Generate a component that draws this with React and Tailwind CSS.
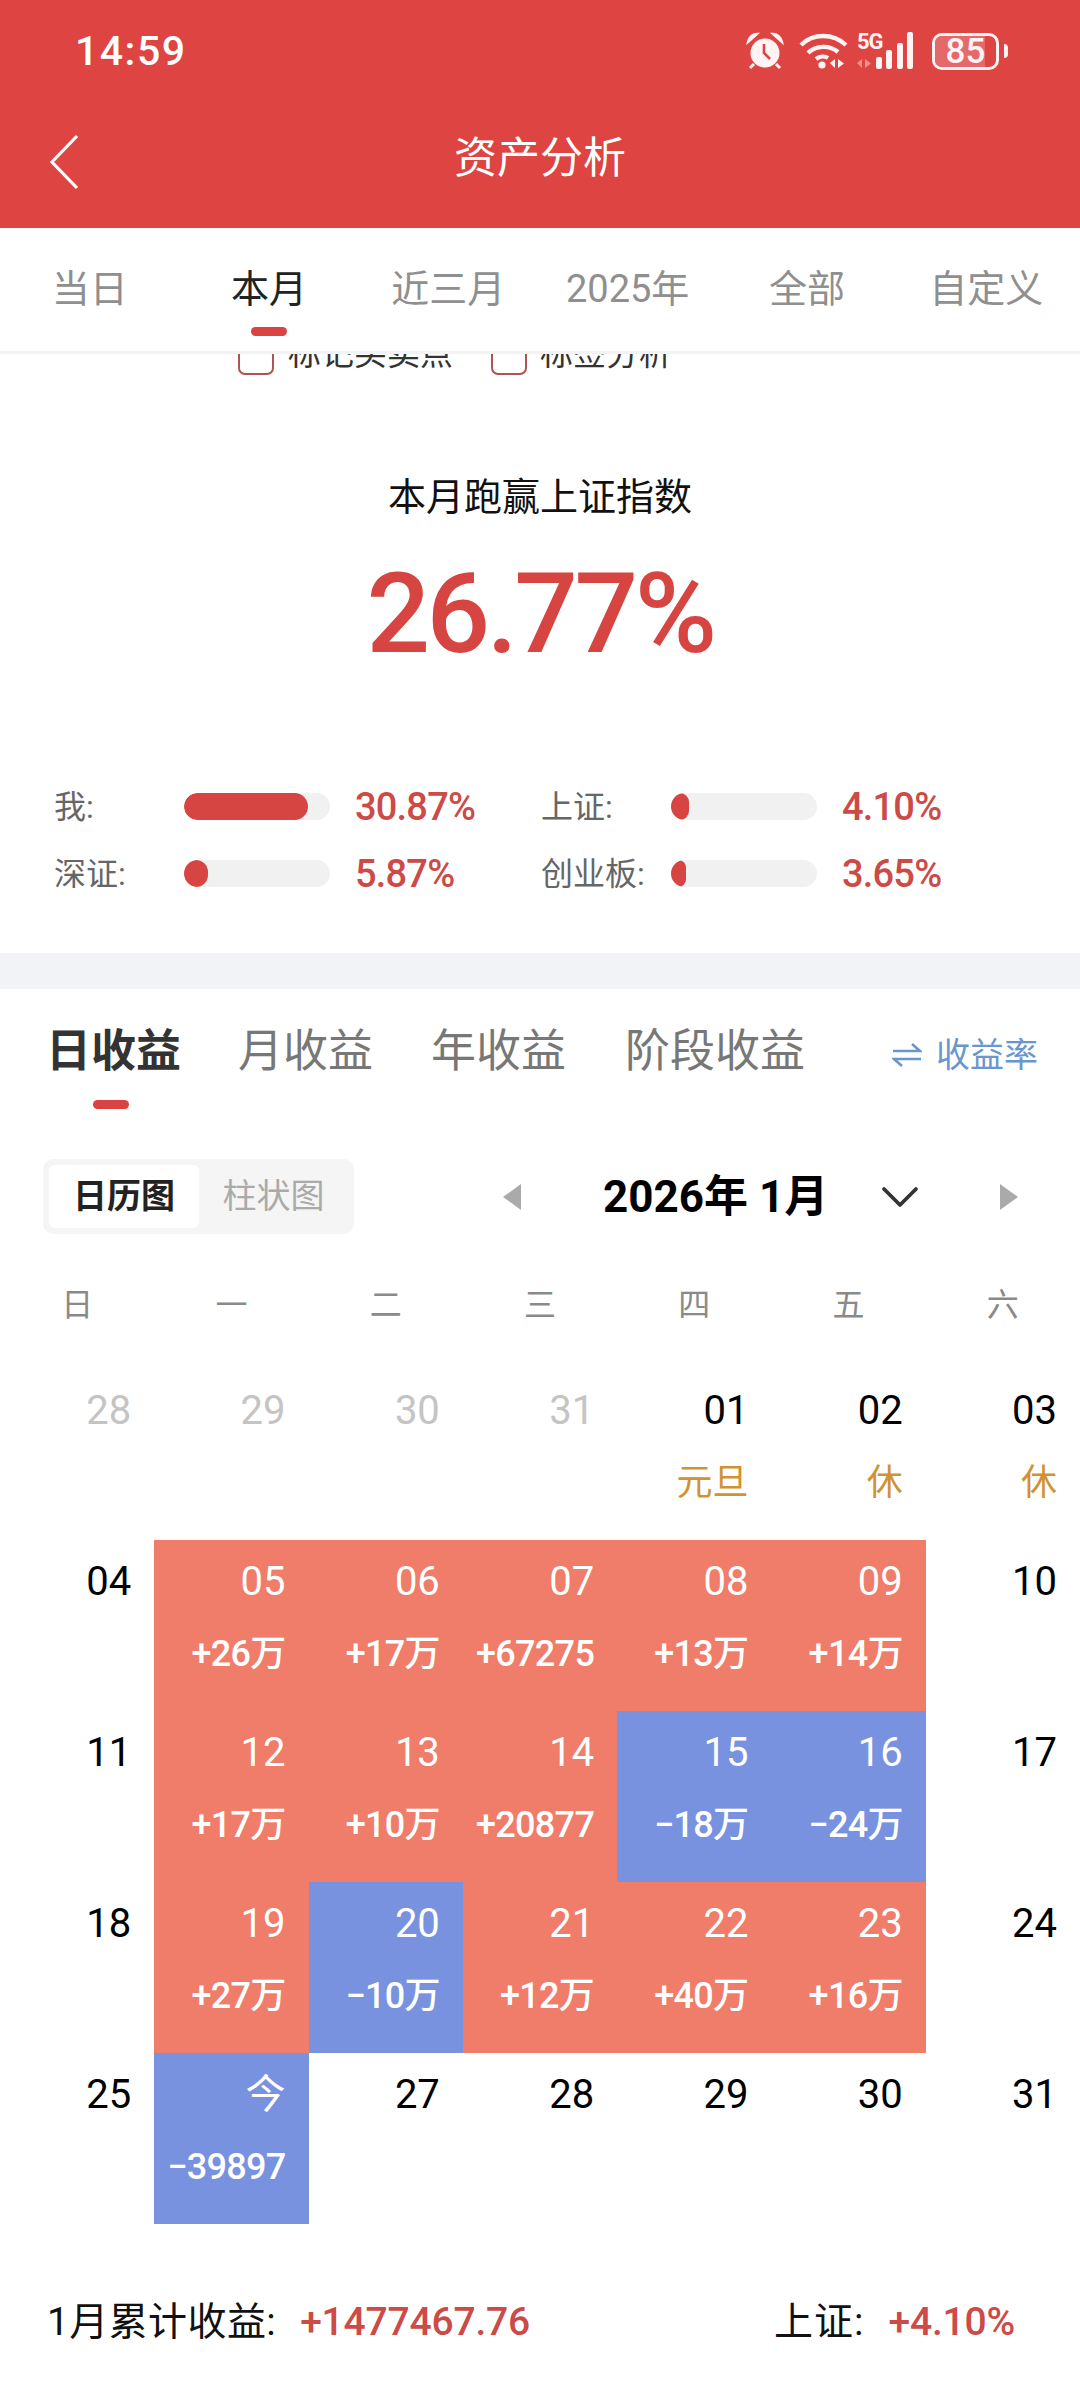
import { ChevronDown } from "lucide-react";

const cjk = "font-['Roboto','Noto_Sans_CJK_SC',sans-serif]";

// 顶部切换
const periods = ["当日", "本月", "近三月", "2025年", "全部", "自定义"];

const compare = [
  { label: "我:", width: 124, value: "30.87%" },
  { label: "上证:", width: 18, value: "4.10%" },
  { label: "深证:", width: 24, value: "5.87%" },
  { label: "创业板:", width: 15, value: "3.65%" },
];

const weekdays = ["日", "一", "二", "三", "四", "五", "六"];

// up = 红, down = 蓝
const days = [
  { d: "28", muted: true }, { d: "29", muted: true }, { d: "30", muted: true }, { d: "31", muted: true },
  { d: "01", note: "元旦" }, { d: "02", note: "休" }, { d: "03", note: "休" },
  { d: "04" }, { d: "05", v: "+26万", up: true }, { d: "06", v: "+17万", up: true }, { d: "07", v: "+67275", up: true },
  { d: "08", v: "+13万", up: true }, { d: "09", v: "+14万", up: true }, { d: "10" },
  { d: "11" }, { d: "12", v: "+17万", up: true }, { d: "13", v: "+10万", up: true }, { d: "14", v: "+20877", up: true },
  { d: "15", v: "−18万" }, { d: "16", v: "−24万" }, { d: "17" },
  { d: "18" }, { d: "19", v: "+27万", up: true }, { d: "20", v: "−10万" }, { d: "21", v: "+12万", up: true },
  { d: "22", v: "+40万", up: true }, { d: "23", v: "+16万", up: true }, { d: "24" },
  { d: "25" }, { d: "今", v: "−39897" }, { d: "27" }, { d: "28" }, { d: "29" }, { d: "30" }, { d: "31" },
];

function StatusIcons() {
  return (
    <div className="flex items-center">
      {/* 闹钟 */}
      <svg width="38" height="38" viewBox="0 0 38 38" fill="none">
        <circle cx="19" cy="21" r="14.500" fill="#fff3f3" />
        <path d="M18 12v9l6 6" stroke="#dd4442" strokeWidth="2.6" />
        <path d="M2 10c1-5 5-8 9-8L2 10zM36 10c-1-5-5-8-9-8l9 8z" fill="#fff3f3" stroke="#fff3f3" strokeWidth="2.4" />
        <path d="M8 32l-4 4M30 32l4 4" stroke="#fff3f3" strokeWidth="3" />
      </svg>
      {/* wifi */}
      <svg className="ml-[15px]" width="50" height="38" viewBox="0 0 50 38" fill="none">
        <path d="M2 13c12-12 32-12 45 0" stroke="#fff3f3" strokeWidth="4.4" />
        <path d="M9 21c8-8 22-8 30-1" stroke="#fff3f3" strokeWidth="4.4" />
        <path d="M17 27c4-3 9-3 12-1" stroke="#fff3f3" strokeWidth="4.4" />
        <circle cx="23" cy="33" r="3.6" fill="#fff3f3" />
        <path d="M36 27v9l-5-5zM39 27v9l6-4.500z" fill="#fff3f3" />
      </svg>
      {/* 5G + 信号 */}
      <div className="relative ml-[8px] w-[64px] h-[38px]">
        <span className="absolute left-0 top-[-1px] font-['Roboto',sans-serif] font-bold text-[22px] leading-[22px] text-[#fff3f3] tracking-[-1px]">5G</span>
        <svg className="absolute left-0 bottom-0" width="64" height="38" viewBox="0 0 64 38">
          <path d="M5 27v9l-5-5zM8 27v9l6-4.500z" fill="#f08f8c" />
          <rect x="19" y="25" width="6" height="12" rx="2" fill="#fff3f3" />
          <rect x="29" y="18" width="6" height="19" rx="2" fill="#fff3f3" />
          <rect x="40" y="11" width="6" height="26" rx="2" fill="#fff3f3" />
          <rect x="50" y="0" width="6" height="37" rx="2" fill="#fff3f3" />
        </svg>
      </div>
      {/* 电量 */}
      <div className="relative ml-[11px] flex items-center">
        <div className="relative w-[67px] h-[37px] rounded-[10px] border-[3px] border-[#fff3f3] overflow-hidden flex items-center">
          <div className="absolute left-0 top-0 bottom-0 w-[50px] bg-[#e5696a]" />
          <span className="relative w-full text-center font-['Roboto',sans-serif] font-medium text-[35px] leading-[31px] text-[#fff3f3]">85</span>
        </div>
        <div className="ml-[5px] w-[4px] h-[14px] rounded-r bg-[#fff3f3]" />
      </div>
    </div>
  );
}

function CompareRow({ label, width, value }) {
  return (
    <div className="flex items-center h-[27px]">
      <span className="w-[130px] text-[32px] leading-none text-[#666]">{label}</span>
      <div className="w-[146px] h-[27px] rounded-full bg-[#f1f1f1] overflow-hidden">
        <div className="h-full rounded-full bg-[#d64541]" style={{ width }} />
      </div>
      <span className="ml-[25px] text-[38px] leading-none font-medium tracking-[-0.8px] text-[#cc4a47]">{value}</span>
    </div>
  );
}

function DayCell({ d, v, up, muted, note }) {
  const filled = v !== undefined;
  const bg = !filled ? "" : up ? "bg-[#ef7d69]" : "bg-[#7992e0]";
  const color = muted ? "text-[#c4c4c4]" : filled ? "text-white" : "text-black";
  return (
    <div className={`h-[171px] pr-[23px] pt-[20px] flex flex-col items-end ${bg}`}>
      <span className={`text-[40px] leading-[44px] ${color}`}>{d}</span>
      {v && <span className="mt-[28px] text-[36px] leading-[44px] font-medium tracking-[-0.7px] text-white whitespace-nowrap">{v}</span>}
      {note && <span className="mt-[28px] text-[36px] leading-[44px] text-[#d09232]">{note}</span>}
    </div>
  );
}

export default function App() {
  return (
    <div className={`w-[1080px] h-[2400px] bg-white overflow-hidden ${cjk}`}>
      {/* 红色头部 */}
      <div className="h-[228px] bg-[#dd4442] text-white">
        <div className="h-[102px] pl-[75px] pr-[72px] flex items-center justify-between">
          <span className="text-[41px] leading-none font-medium tracking-[1.5px]">14:59</span>
          <StatusIcons />
        </div>
        <div className="relative h-[106px] flex items-center justify-center pt-[6px]">
          <svg className="absolute left-[48px] top-[32px]" width="32" height="56" viewBox="0 0 32 56" fill="none" stroke="#fff" strokeWidth="3.2">
            <path d="M29 2L4 28l25 26" />
          </svg>
          <span className="text-[43px] leading-none">资产分析</span>
        </div>
      </div>

      {/* 时间切换 */}
      <div className="h-[126px] pr-[4px] grid grid-cols-6 border-b-[3px] border-[#f3f3f3]">
        {periods.map((p, i) => (
          <div key={p} className="flex flex-col items-center pt-[41px]">
            <span className={`text-[38px] leading-[40px] whitespace-nowrap ${i === 1 ? "text-[#222]" : "text-[#8f8f8f]"}`}>{p}</span>
            {i === 1 && <div className="mt-[18px] w-[36px] h-[9px] rounded-full bg-[#d94341]" />}
          </div>
        ))}
      </div>

      {/* 被遮挡的勾选项 */}
      <div className="h-[21px] overflow-hidden flex items-end pl-[238px] text-[33px] leading-none text-[#333]">
        <div className="w-[36px] h-[40px] shrink-0 rounded-[7px] border-[2.5px] border-[#b0524e]" />
        <span className="ml-[14px] mb-[5px] whitespace-nowrap">标记买卖点</span>
        <div className="ml-[38px] w-[36px] h-[40px] shrink-0 rounded-[7px] border-[2.5px] border-[#b0524e]" />
        <span className="ml-[13px] mb-[5px] whitespace-nowrap">标签分析</span>
      </div>

      {/* 跑赢 */}
      <div className="flex flex-col items-center pt-[100px]">
        <span className="text-[38px] leading-[44px] text-[#111]">本月跑赢上证指数</span>
        <span className="mt-[35px] text-[112px] leading-[120px] font-medium tracking-[-3.5px] text-[#d64541]">26.77%</span>
      </div>
      <div className="mt-[119px] px-[54px] grid grid-cols-[487px_1fr] gap-y-[40px]">
        {compare.map((c) => (
          <CompareRow key={c.label} {...c} />
        ))}
      </div>
      <div className="mt-[66px] h-[36px] bg-[#f2f3f7]" />

      {/* 收益切换 */}
      <div className="relative h-[127px] pl-[46px] pr-[42px] flex items-start pt-[38px]">
        <span className="w-[192px] text-[45px] leading-[50px] font-bold text-[#333]">日收益</span>
        <span className="w-[193px] text-[45px] leading-[50px] text-[#777]">月收益</span>
        <span className="w-[194px] text-[45px] leading-[50px] text-[#777]">年收益</span>
        <span className="text-[45px] leading-[50px] text-[#777]">阶段收益</span>
        <span className="ml-auto mt-[8px] flex items-center text-[#6a96d0] text-[34px] leading-[40px]">
          <svg className="mr-[14px]" width="30" height="26" viewBox="0 0 30 26" fill="none" stroke="#6a96d0" strokeWidth="2.6">
            <path d="M1 9h27L20 2" />
            <path d="M29 17H2l8 7" />
          </svg>
          收益率
        </span>
        <div className="absolute left-[93px] top-[111px] w-[36px] h-[9px] rounded-full bg-[#d94341]" />
      </div>

      {/* 日历头 */}
      <div className="mt-[43px] h-[75px] pl-[43px] flex items-center">
        <div className="w-[311px] h-[75px] rounded-[10px] bg-[#f5f5f5] p-[6px] flex items-center">
          <div className="w-[150px] h-[63px] rounded-[6px] bg-white flex items-center justify-center text-[34px] font-bold text-[#222]">日历图</div>
          <div className="w-[149px] text-center text-[34px] text-[#aaa]">柱状图</div>
        </div>
        <svg className="ml-[149px]" width="20" height="26" viewBox="0 0 20 26">
          <path d="M18 0v26L0 13z" fill="#aaa" />
        </svg>
        <span className="ml-[80px] text-[44px] leading-none font-bold text-black whitespace-nowrap">2026年 1月</span>
        <ChevronDown className="ml-[40px]" size={64} strokeWidth={1.4} color="#333" />
        <svg className="ml-[66px]" width="20" height="26" viewBox="0 0 20 26">
          <path d="M2 0v26l18-13z" fill="#aaa" />
        </svg>
      </div>

      {/* 星期 */}
      <div className="mt-[51px] grid grid-cols-7">
        {weekdays.map((w) => (
          <div key={w} className="text-center text-[32px] leading-[40px] text-[#8a8a8a]">{w}</div>
        ))}
      </div>

      {/* 日历 */}
      <div className="mt-[44px] grid grid-cols-7">
        {days.map((c, i) => (
          <DayCell key={i} {...c} />
        ))}
      </div>

      {/* 累计 */}
      <div className="mt-[76px] pl-[47px] pr-[65px] flex items-center justify-between text-[39px] leading-[44px]">
        <div className="flex items-center">
          <span className="text-[#111] tracking-[0.4px]">1月累计收益:</span>
          <span className="ml-[24px] font-medium tracking-[-0.2px] text-[#cc4a47]">+1477467.76</span>
        </div>
        <div className="flex items-center">
          <span className="text-[#111] tracking-[1px]">上证:</span>
          <span className="ml-[24px] font-medium tracking-[-0.2px] text-[#cc4a47]">+4.10%</span>
        </div>
      </div>
    </div>
  );
}
